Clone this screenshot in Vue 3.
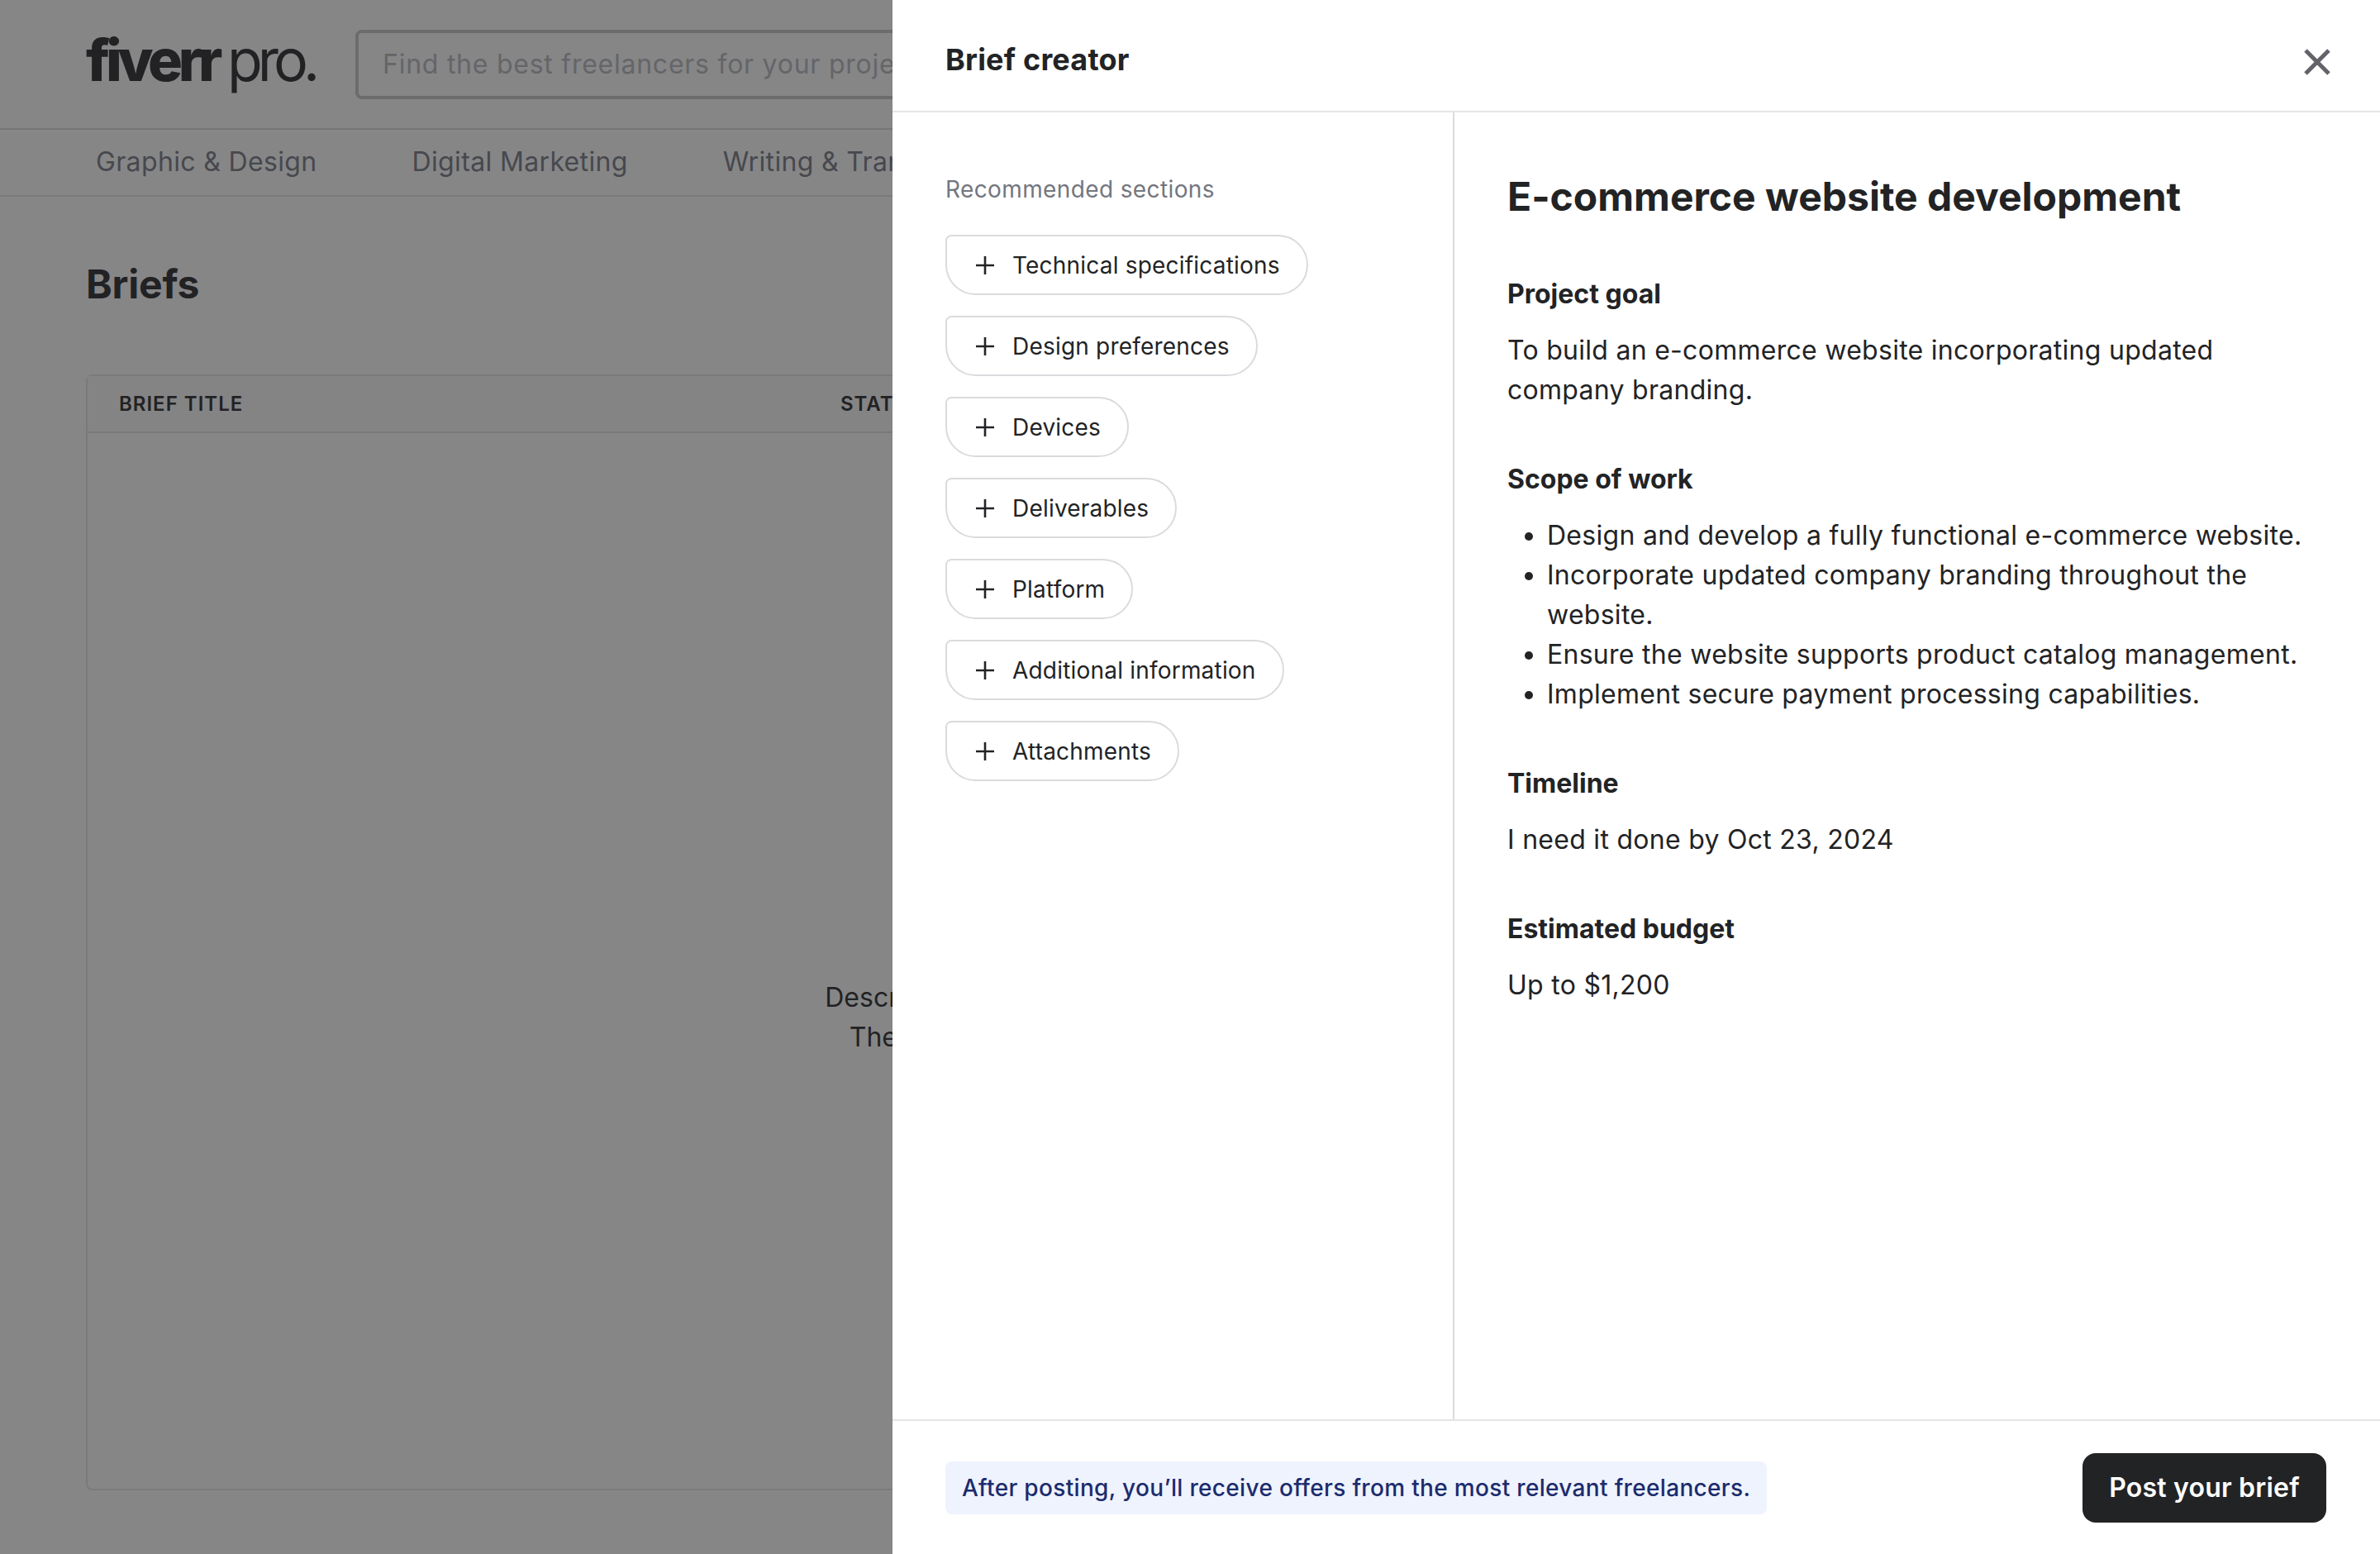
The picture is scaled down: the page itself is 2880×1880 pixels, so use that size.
<script setup>
const nav = ['Graphic & Design', 'Digital Marketing', 'Writing & Translation', 'Video & Animation', 'Music & Audio']
const chips = ['Technical specifications', 'Design preferences', 'Devices', 'Deliverables', 'Platform', 'Additional information', 'Attachments']
const scope = [
  'Design and develop a fully functional e-commerce website.',
  'Incorporate updated company branding throughout the website.',
  'Ensure the website supports product catalog management.',
  'Implement secure payment processing capabilities.'
]
</script>

<template>
  <div class="root">
    <div class="page">
      <header class="top">
        <div class="logo"><span class="fiverr">fiverr</span><span class="pro">pro.</span></div>
        <div class="search">Find the best freelancers for your project</div>
      </header>
      <nav class="nav"><span v-for="n in nav" :key="n">{{ n }}</span></nav>
      <main class="main">
        <h1>Briefs</h1>
        <section class="table">
          <div class="thead"><span class="c1">BRIEF TITLE</span><span>STATUS</span></div>
          <div class="empty">
            <p>Describe what you need and let us build the briefs for you.</p>
            <p>The right freelancers will then send you all their offers.</p>
          </div>
        </section>
      </main>
    </div>

    <div class="overlay"></div>

    <aside class="drawer">
      <div class="dhead">
        <h2>Brief creator</h2>
        <svg class="close" viewBox="0 0 32 32" aria-label="Close"><path d="M2 2 30 30M30 2 2 30" /></svg>
      </div>
      <div class="dbody">
        <div class="left">
          <div class="rec">Recommended sections</div>
          <div class="chips">
            <button v-for="c in chips" :key="c" class="chip">
              <svg viewBox="0 0 22 22"><path d="M11 0V22M0 11H22" /></svg>
              <span>{{ c }}</span>
            </button>
          </div>
        </div>
        <article class="right">
          <h3>E-commerce website development</h3>
          <section>
            <h4>Project goal</h4>
            <p>To build an e-commerce website incorporating updated company branding.</p>
          </section>
          <section>
            <h4>Scope of work</h4>
            <ul><li v-for="s in scope" :key="s">{{ s }}</li></ul>
          </section>
          <section>
            <h4>Timeline</h4>
            <p>I need it done by Oct 23, 2024</p>
          </section>
          <section>
            <h4>Estimated budget</h4>
            <p>Up to $1,200</p>
          </section>
        </article>
      </div>
      <div class="dfoot">
        <div class="note">After posting, you’ll receive offers from the most relevant freelancers.</div>
        <button class="post">Post your brief</button>
      </div>
    </aside>
  </div>
</template>

<style scoped>
.root { position: relative; width: 2880px; height: 1880px; overflow: hidden; background: #fff; color: #222325; font-family: Inter, "Noto Sans", sans-serif; }
.page { width: 2880px; height: 1880px; display: flex; flex-direction: column; }
.top { height: 157px; flex: none; display: flex; align-items: flex-start; padding: 36px 0 0 104px; box-sizing: border-box; border-bottom: 2px solid #dadbdd; }
.logo { width: 326px; height: 84px; flex: none; display: flex; align-items: baseline; line-height: 74px; font-size: 70px; }
.fiverr { font-weight: 800; letter-spacing: -5.4px; }
.pro { font-weight: 400; letter-spacing: -6px; margin-left: 11px; }
.search { width: 1500px; height: 84px; box-sizing: border-box; border: 4px solid #c5c6c9; border-radius: 8px; padding-left: 29px; line-height: 76px; font-size: 32px; color: #b5b6ba; letter-spacing: .75px; }
.nav { height: 81px; flex: none; box-sizing: border-box; border-bottom: 2px solid #e4e5e7; padding: 0 0 2px 116px; display: flex; gap: 115px; align-items: center; font-size: 32px; color: #74767e; white-space: nowrap; letter-spacing: .35px; }
.main { padding: 0 104px; flex: 1; display: flex; flex-direction: column; }
h1 { margin: 78px 0 0; font-size: 48px; line-height: 56px; font-weight: 700; letter-spacing: -.2px; }
.table { margin-top: 81px; height: 1350px; box-sizing: border-box; border: 2px solid #e4e5e7; border-radius: 8px; display: flex; flex-direction: column; }
.thead { height: 69px; flex: none; box-sizing: border-box; border-bottom: 2px solid #e4e5e7; background: #fafafa; display: flex; align-items: center; padding-left: 38px; font-size: 24px; font-weight: 600; letter-spacing: 1px; }
.c1 { width: 873px; }
.empty { flex: 1; display: flex; flex-direction: column; align-items: center; justify-content: flex-start; padding-top: 659px; font-size: 32px; line-height: 48px; }
.empty p { margin: 0; }

.overlay { position: absolute; inset: 0; background: rgba(34, 35, 37, .55); }

.drawer { position: absolute; top: 0; right: 0; bottom: 0; width: 1800px; background: #fff; display: flex; flex-direction: column; }
.dhead { height: 136px; flex: none; box-sizing: border-box; border-bottom: 2px solid #e4e5e7; padding: 0 60px 0 64px; display: flex; justify-content: space-between; align-items: center; }
h2 { margin: 0; font-size: 36px; line-height: 48px; font-weight: 700; position: relative; top: 5px; letter-spacing: .2px; }
.close { width: 32px; height: 32px; fill: none; stroke: #62646a; stroke-width: 5; position: relative; top: 8px; }
.dbody { flex: 1; display: flex; min-height: 0; }
.left { width: 680px; flex: none; box-sizing: border-box; padding: 73px 64px 0; border-right: 2px solid #dadbdd; }
.rec { font-size: 28px; line-height: 40px; color: #74767e; letter-spacing: .38px; }
.chips { margin-top: 35px; display: flex; flex-direction: column; align-items: flex-start; gap: 25px; }
.chip { height: 73px; box-sizing: border-box; border: 2px solid #dadbdd; border-radius: 8px 40px 40px 40px; background: #fff; padding: 0 32px 0 35px; display: flex; align-items: center; gap: 22px; font: inherit; font-size: 28px; color: #222325; white-space: nowrap; letter-spacing: .2px; }
.chip svg { width: 22px; height: 22px; flex: none; fill: none; stroke: #222325; stroke-width: 2.6; }
.right { flex: 1; box-sizing: border-box; padding: 0 64px; }
h3 { margin: 0; padding-top: 72px; font-size: 48px; line-height: 60px; font-weight: 700; }
section { margin: 0; }
.right section { margin-top: 64px; }
.right section + section { margin-top: 60px; }
h4 { margin: 0 0 20px; font-size: 32px; line-height: 48px; font-weight: 700; }
.right p { margin: 0; font-size: 32px; line-height: 48px; letter-spacing: .28px; }
ul { margin: 0; padding-left: 48px; font-size: 32px; line-height: 48px; letter-spacing: .28px; }
.dfoot { height: 163px; flex: none; box-sizing: border-box; border-top: 2px solid #e4e5e7; padding: 0 65px 0 64px; display: flex; justify-content: space-between; align-items: center; }
.note { height: 64px; box-sizing: border-box; padding: 0 20px; background: #eff3fe; border-radius: 8px; color: #1c2c6d; font-size: 28px; font-weight: 500; line-height: 64px; white-space: nowrap; letter-spacing: .33px; }
.post { height: 84px; width: 295px; border: 0; border-radius: 16px; background: #222325; color: #fff; font: inherit; font-size: 32px; font-weight: 600; letter-spacing: .2px; }
</style>
